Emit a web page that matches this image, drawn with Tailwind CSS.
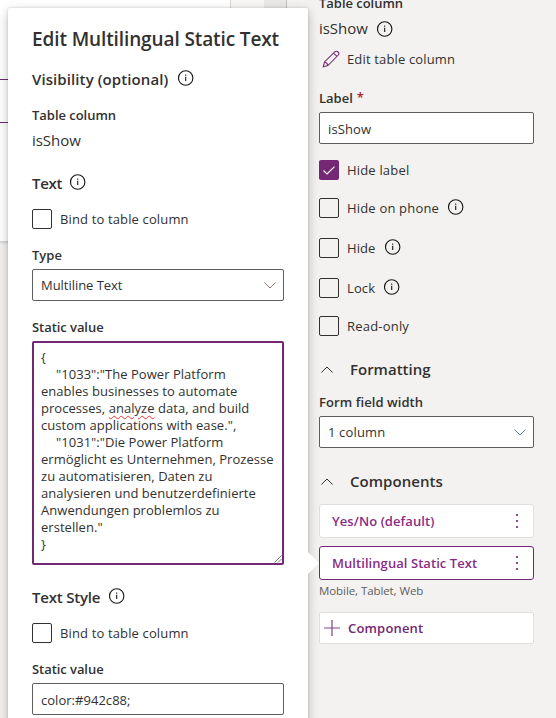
<!DOCTYPE html>
<html lang="en">
<head>
<meta charset="utf-8">
<title>Edit Multilingual Static Text</title>
<script src="https://cdn.jsdelivr.net/npm/@tailwindcss/browser@4"></script>
</head>
<body class="font-['Open_Sans','Noto_Sans',sans-serif] text-[13px] text-[#323130] whitespace-nowrap">
<svg class="hidden">
  <symbol id="info" viewBox="0 0 16 16"><circle cx="7.7" cy="8" r="7.2" fill="none" stroke="#161514" stroke-width="1.1"/><path d="M7.7 6.8V11M7.7 4.5V5.8" stroke="#161514" stroke-width="1.1" fill="none"/></symbol>
  <symbol id="down" viewBox="0 0 12 7"><path d="M.4 .5 6 6 11.6 .5" fill="none" stroke="currentColor" stroke-width="1"/></symbol>
  <symbol id="up" viewBox="0 0 12 7"><path d="M.4 6.5 6 1 11.6 6.5" fill="none" stroke="currentColor" stroke-width="1"/></symbol>
</svg>
<div class="relative flex h-[718px] w-[556px] overflow-hidden bg-[#f3f2f1]">
  <!-- Form canvas behind the callout -->
  <div class="w-[231px] shrink-0">
    <div class="h-[242px] border-r border-b border-[#d8d6d4] bg-white pt-[79px] shadow-sm">
      <div class="h-[44px] border-y border-[#742774]"></div>
    </div>
  </div>
  <div class="w-[33px] shrink-0 bg-[#f8f7f6]"></div>
  <div class="w-[23px] shrink-0 border-r border-[#c4c2c0] bg-[#e9e8e7]"></div>

  <!-- Property pane -->
  <aside class="w-[269px] shrink-0 pl-8">
    <div class="flex h-5 -mt-[6px] items-center font-semibold"><span class="tracking-[-0.03px]">Table column</span></div>
    <div class="mt-[4px] flex h-5 items-center text-[15px]"><span class="w-[49px] pt-px tracking-[-0.05px]">isShow</span><svg class="ml-[9px] mt-[2px] size-4"><use href="#info"/></svg></div>
    <div class="mt-[11px] flex h-5 items-center"><svg class="ml-[3px] size-[18px]" viewBox="0 0 18 18" fill="none" stroke="#742774" stroke-width="1.05"><path d="M1.2 16.8 2.5 12 13 1.7Q14.6.6 16.1 2T16.3 5L5.9 15.5ZM2.5 12Q5.2 12.4 5.9 15.5M11.6 3.1l3.3 3.3"/></svg><span class="ml-[7px] pt-[2px] tracking-[0.15px]">Edit table column</span></div>
    <div class="mt-[19px] flex h-5 items-center font-semibold"><span class="pt-[2px]">Label</span><span class="ml-1 text-[#a4262c]">*</span></div>
    <div class="mt-1 flex h-8 w-[215px] items-center rounded-[2px] border border-[#605e5c] bg-white px-2"><span class="pt-[3px] tracking-[0.1px]">isShow</span></div>

    <div class="mt-4 flex h-5 items-center"><span class="flex size-5 items-center justify-center rounded-[2px] bg-[#742774]"><svg class="h-[9px] w-3" viewBox="0 0 12 9" fill="none" stroke="white" stroke-width="1.2"><path d="M.5 4.5 4 8 11.5 .6"/></svg></span><span class="ml-2 pt-[2px] tracking-[0.18px]">Hide label</span></div>
    <div class="mt-[18px] flex h-5 items-center"><span class="size-5 rounded-[2px] border border-[#323130]"></span><span class="ml-2 w-[93px] pt-[2px] tracking-[0.18px]">Hide on phone</span><svg class="ml-2 -mt-[3px] size-4"><use href="#info"/></svg></div>
    <div class="mt-5 flex h-5 items-center"><span class="size-5 rounded-[2px] border border-[#323130]"></span><span class="ml-2 w-[29px] pt-[2px] tracking-[0.1px]">Hide</span><svg class="ml-[9px] -mt-[3px] size-4"><use href="#info"/></svg></div>
    <div class="mt-5 flex h-5 items-center"><span class="size-5 rounded-[2px] border border-[#323130]"></span><span class="ml-2 w-[29px] pt-[2px] tracking-[0.1px]">Lock</span><svg class="ml-2 -mt-[3px] size-4"><use href="#info"/></svg></div>
    <div class="mt-[18px] flex h-5 items-center"><span class="size-5 rounded-[2px] border border-[#323130]"></span><span class="ml-2 pt-[2px] tracking-[0.2px]">Read-only</span></div>

    <div class="mt-[23px] flex h-5 items-center text-[15px] font-semibold"><svg class="ml-[2px] h-[7px] w-3"><use href="#up"/></svg><span class="ml-[17px] tracking-[0px]">Formatting</span></div>
    <div class="mt-[13px] flex h-5 items-center font-semibold"><span class="pt-[2px] tracking-[0.08px]">Form field width</span></div>
    <div class="mt-1 flex h-8 w-[215px] items-center justify-between rounded-[2px] border border-[#605e5c] bg-white px-[7px] pl-2"><span class="pt-[2px] tracking-[0.15px]">1 column</span><svg class="h-[7px] w-3 text-[#5f7f95]"><use href="#down"/></svg></div>
    <div class="mt-[23px] flex h-5 items-center text-[15px] font-semibold"><svg class="ml-[2px] h-[7px] w-3"><use href="#up"/></svg><span class="ml-[17px] tracking-[0.05px]">Components</span></div>

    <div class="mt-[13px] flex h-[34px] w-[215px] items-center justify-between rounded-[3px] border border-[#e1dfdd] bg-white pl-3 pr-[15px] font-semibold text-[#8a2c86]"><span class="pt-[2px] tracking-[0.08px]">Yes/No (default)</span><svg class="h-[14px] w-[2px]" fill="#8d4a8d"><path d="M0 0h2v2H0zM0 6h2v2H0zM0 12h2v2H0z"/></svg></div>
    <div class="mt-2 flex h-[34px] w-[215px] items-center justify-between rounded-[3px] border border-[#742774] bg-white pl-3 pr-[15px] font-semibold text-[#8a2c86]"><span class="pt-[2px] tracking-[0.06px]">Multilingual Static Text</span><svg class="h-[14px] w-[2px]" fill="#8d4a8d"><path d="M0 0h2v2H0zM0 6h2v2H0zM0 12h2v2H0z"/></svg></div>
    <div class="mt-[1px] flex h-5 items-center text-[11.5px] text-[#605e5c]"><span class="tracking-[-0.08px]">Mobile, Tablet, Web</span></div>
    <div class="mt-[11px] flex h-8 w-[215px] items-center rounded-[2px] border border-[#e1dfdd] bg-white pl-1 font-semibold text-[#742774]"><svg class="size-4" viewBox="0 0 16 16" stroke="#84478a" stroke-width="1.2"><path d="M0 8h16M8 0v16"/></svg><span class="ml-2 pt-[2px] tracking-[0.18px]">Component</span></div>
  </aside>

  <!-- Callout -->
  <section class="absolute left-2 top-2 h-[730px] w-[300px] rounded-[2px] bg-white px-6 pt-4 shadow-[0_4px_12px_rgba(0,0,0,0.24),0_0_3px_rgba(0,0,0,0.16)]">
    <div class="flex h-[30px] items-center text-[19px] font-semibold"><span class="tracking-[-0.11px]">Edit Multilingual Static Text</span></div>
    <div class="mt-[15px] flex h-5 items-center text-[15px] font-semibold"><span class="w-[137px] tracking-[0.09px]">Visibility (optional)</span><svg class="ml-[8.5px] -mt-[2px] size-4"><use href="#info"/></svg></div>
    <div class="mt-4 flex h-5 items-center font-semibold"><span class="pt-[2px] tracking-[-0.03px]">Table column</span></div>
    <div class="mt-[5px] flex h-5 items-center text-[15px]"><span class="tracking-[-0.05px]">isShow</span></div>
    <div class="mt-[23px] flex h-5 items-center text-[15px] font-semibold"><span class="w-[30px] tracking-[-0.3px]">Text</span><svg class="ml-2 -mt-[2px] size-4"><use href="#info"/></svg></div>
    <div class="mt-[16px] flex h-5 items-center"><span class="size-5 rounded-[2px] border border-[#323130]"></span><span class="ml-2 pt-[2px] tracking-[0.14px]">Bind to table column</span></div>
    <div class="mt-4 flex h-5 items-center font-semibold"><span class="pt-[2px]">Type</span></div>
    <div class="mt-1 flex h-8 items-center justify-between rounded-[2px] border border-[#605e5c] pl-2 pr-[7px]"><span class="pt-[2px] tracking-[-0.04px]">Multiline Text</span><svg class="h-[7px] w-3 text-[#8f7768]"><use href="#down"/></svg></div>
    <div class="mt-4 flex h-5 items-center font-semibold"><span class="pt-[2px] tracking-[-0.06px]">Static value</span></div>
    <div class="relative mt-1 h-[224px] rounded-[2px] border-2 border-[#742774] pl-[7px] pt-[6px] leading-[17px] whitespace-pre tracking-[0.04px]">{
<span class="inline-block w-[15px]">    </span>"1033":"The Power Platform
enables businesses to automate
processes, <span class="underline decoration-wavy decoration-[1.2px] decoration-[#f03030] underline-offset-[2px]">analyze</span> data, and build
custom applications with ease.",
<span class="inline-block w-[15px]">    </span>"1031":"Die Power Platform
ermöglicht es Unternehmen, Prozesse
zu automatisieren, Daten zu
analysieren und benutzerdefinierte
Anwendungen problemlos zu
erstellen."
}<svg class="absolute bottom-0 right-0 size-[9px]" viewBox="0 0 9 9" stroke="#605e5c" stroke-width=".8"><path d="M1.5 8.5 8.5 1.5M5 8.5 8.5 5"/></svg></div>
    <div class="mt-[22px] flex h-5 items-center text-[15px] font-semibold"><span class="w-[69px] tracking-[-0.2px]">Text Style</span><svg class="ml-2 -mt-[2px] size-4"><use href="#info"/></svg></div>
    <div class="mt-4 flex h-5 items-center"><span class="size-5 rounded-[2px] border border-[#323130]"></span><span class="ml-2 pt-[2px] tracking-[0.14px]">Bind to table column</span></div>
    <div class="mt-4 flex h-5 items-center font-semibold"><span class="pt-[2px] tracking-[-0.06px]">Static value</span></div>
    <div class="mt-1 flex h-8 items-center rounded-[2px] border border-[#605e5c] px-2"><span class="pt-[3px] tracking-[0.03px]">color:#942c88;</span></div>
  </section>
  <div class="absolute left-[308px] top-[552px] h-[22px] w-[11px] bg-white [clip-path:polygon(0_0,100%_50%,0_100%)]"></div>
</div>
</body>
</html>
